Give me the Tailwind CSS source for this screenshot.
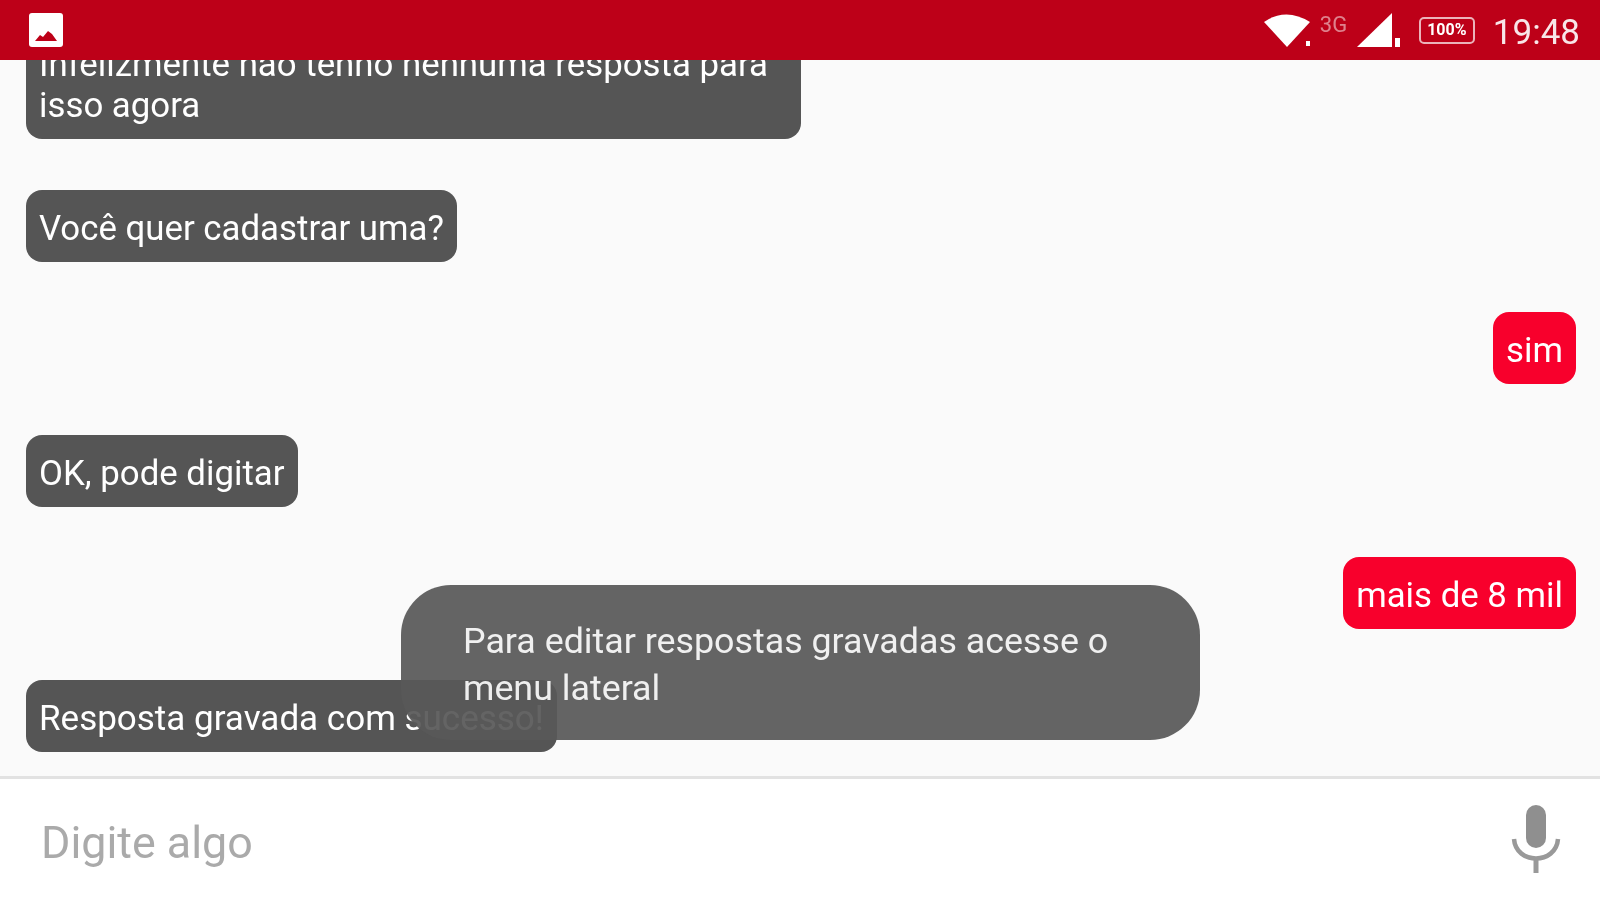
<!DOCTYPE html>
<html lang="en">
<head>
  <meta charset="UTF-8" />
  <title>Chat</title>
  <script src="https://cdn.jsdelivr.net/npm/@tailwindcss/browser@4"></script>
</head>
<body class="bg-[#fafafa] font-['Roboto',sans-serif]">
  <div class="relative w-[1600px] h-[900px] overflow-hidden flex flex-col blur-[0.6px]">
    <!-- status bar -->
    <header class="relative z-10 h-[60px] shrink-0 bg-[#bd0018] flex items-center justify-between pl-[29px] pr-[20px] text-white">
      <svg width="34" height="34" viewBox="0 0 34 34">
        <rect width="34" height="34" rx="3" fill="#fff" />
        <path d="M6 28 L11 22 L14 24 L19 18 L23 21 L28 28 Z" fill="#bd0018" />
      </svg>
      <div class="flex items-center">
        <svg width="50" height="36" viewBox="0 0 50 36" class="mr-[8px]">
          <path d="M2 10 Q24 -5 48 10 L25 35 Z" fill="#fff" />
          <rect x="44" y="29" width="4" height="5" fill="#fff" />
        </svg>
        <span class="w-[28px] text-[22px] text-white/50 -mt-[10px] mr-[9px] leading-none">3G</span>
        <svg width="44" height="36" viewBox="0 0 44 36" class="mr-[18px]">
          <path d="M0 35 L35 1 L35 35 Z" fill="#fff" />
          <rect x="38" y="26" width="5" height="9" fill="#fff" />
        </svg>
        <div class="w-[56px] h-[27px] mr-[18px] border-2 border-white/70 rounded-[5px] flex items-center justify-center text-[16px] font-bold leading-none">100%</div>
        <span class="pt-[4px] text-[35px] leading-none text-white/90">19:48</span>
      </div>
    </header>

    <!-- messages -->
    <main class="flex-1 min-h-0 -mt-[34px] px-[24px] flex flex-col gap-[50.500px] text-white text-[34.800px] leading-[41px]">
      <div class="self-start w-[775px] ml-[2px] px-[13px] pt-[18px] pb-[13px] rounded-[16px] bg-[#555555]">Infelizmente não tenho nenhuma resposta para isso agora</div>
      <div class="self-start ml-[2px] px-[13px] pt-[18px] pb-[13px] rounded-[16px] bg-[#555555]">Você quer cadastrar uma?</div>
      <div class="self-end px-[13px] pt-[18px] pb-[13px] rounded-[16px] bg-[#f8002c]">sim</div>
      <div class="self-start ml-[2px] px-[13px] pt-[18px] pb-[13px] rounded-[16px] bg-[#555555]">OK, pode digitar</div>
      <div class="self-end px-[13px] pt-[18px] pb-[13px] rounded-[16px] bg-[#f8002c]">mais de 8 mil</div>
      <div class="self-start ml-[2px] px-[13px] pt-[18px] pb-[13px] rounded-[16px] bg-[#555555] text-[35px]">Resposta gravada com sucesso!</div>
    </main>

    <!-- input -->
    <footer class="h-[124px] shrink-0 bg-white border-t-[3px] border-[#e2e2e2] flex items-center justify-between pl-[41px] pr-[39px]">
      <span class="pt-[7px] text-[44.800px] leading-none text-[#aaaaaa]">Digite algo</span>
      <svg width="50" height="70" viewBox="0 0 50 70">
        <rect x="15" y="0" width="20" height="43" rx="10" fill="#8f8f8f" />
        <path d="M3 34 C5 60 45 60 47 34" fill="none" stroke="#999999" stroke-width="4.500" />
        <rect x="22.500" y="52" width="5" height="16" fill="#999999" />
      </svg>
    </footer>

    <!-- toast -->
    <div class="absolute z-20 left-[401px] top-[585px] w-[799px] h-[155px] rounded-[50px] bg-[#585858]/[.93] pl-[62px] pr-[60px] pt-[33px] text-white/90 text-[35.800px] leading-[47px]">Para editar respostas gravadas acesse o menu lateral</div>
  </div>
</body>
</html>
